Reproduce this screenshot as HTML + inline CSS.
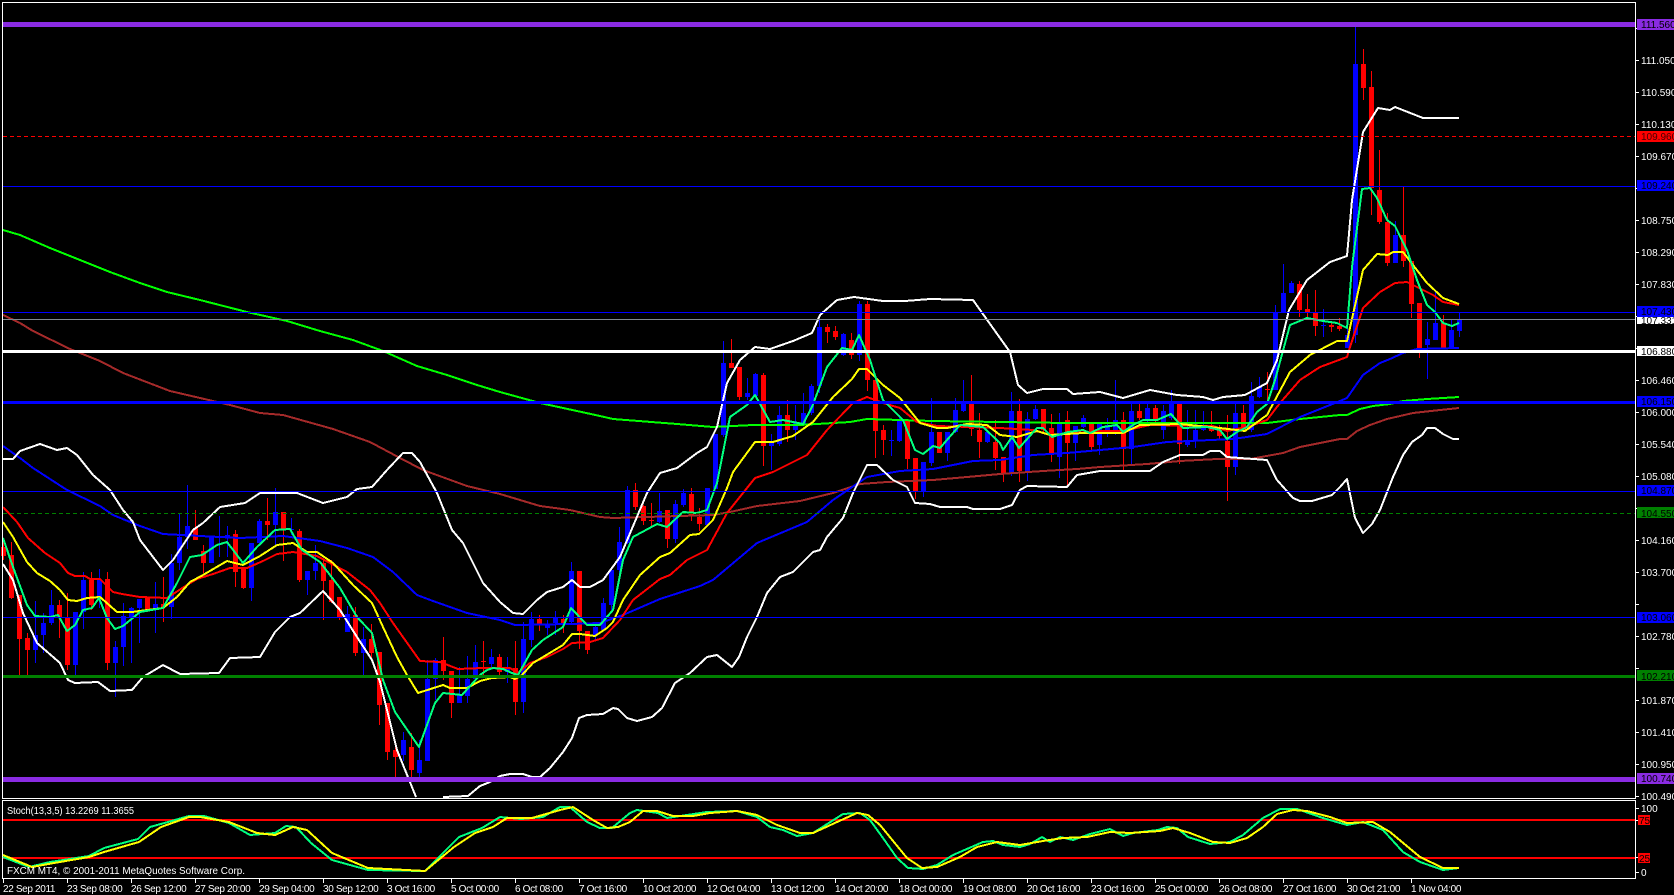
<!DOCTYPE html>
<html>
<head>
<meta charset="utf-8">
<title>FXCM MT4 Chart</title>
<style>
html,body{margin:0;padding:0;background:#000;width:1674px;height:895px;overflow:hidden}
svg{display:block}
text{font-family:"Liberation Sans",sans-serif;font-size:10px;fill:#fff}
.d text{letter-spacing:-.35px}
.k text{fill:#000}
.c{shape-rendering:crispEdges}
polyline{fill:none;stroke-width:2;stroke-linejoin:round}
</style>
</head>
<body>
<svg width="1674" height="895" viewBox="0 0 1674 895" xmlns="http://www.w3.org/2000/svg">
<rect width="1674" height="895" fill="#000"/>

<g class="c">
<!-- red wicks -->
<path stroke="#f00" stroke-width="1" fill="none" d="M3.5 540V560M11.5 542V599M19.5 595V675M27.5 633V675M59.5 600V638M67.5 593V670M91.5 572V610M107.5 572V670M147.5 598V612M163.5 577V622M195.5 510V540M203.5 545V573M235.5 530V587M243.5 568V589M267.5 498V540M283.5 512V561M299.5 529V582M323.5 560V620M331.5 560V603M339.5 597V620M355.5 607V656M371.5 624V660M379.5 652V725M387.5 703V760M395.5 745V777M411.5 733V777M443.5 637V680M451.5 671V718M483.5 641V677M499.5 654V675M515.5 641V715M539.5 615V631M563.5 615V633M579.5 571V649M587.5 631V654M635.5 483V510M643.5 505V525M651.5 503V527M667.5 510V548M691.5 488V521M699.5 508V531M731.5 339V368M739.5 367V400M763.5 373V466M787.5 400V442M827.5 324V343M835.5 326V340M851.5 333V359M867.5 301V391M875.5 380V458M883.5 425V455M907.5 420V469M915.5 458V499M939.5 432V453M971.5 375V436M979.5 413V458M995.5 420V470M1003.5 457V482M1019.5 399V482M1043.5 409V432M1051.5 414V462M1067.5 411V486M1091.5 423V450M1123.5 412V470M1139.5 404V420M1155.5 405V422M1179.5 404V464M1211.5 411V432M1219.5 425V440M1227.5 415V501M1243.5 405V432M1267.5 372V400M1299.5 281V317M1307.5 294V317M1315.5 290V336M1331.5 321V332M1339.5 318V331M1363.5 49V100M1371.5 71V215M1379.5 150V224M1387.5 213V266M1403.5 187V267M1411.5 261V318M1419.5 303V358M1443.5 315V348"/>
<!-- blue wicks -->
<path stroke="#00f" stroke-width="1" fill="none" d="M35.5 601V663M43.5 613V653M51.5 590V625M75.5 612V675M83.5 572V629M99.5 569V608M115.5 641V697M123.5 603V666M131.5 607V663M139.5 599V643M155.5 582V633M171.5 554V619M179.5 513V570M187.5 485V549M211.5 536V563M219.5 516V557M227.5 526V557M251.5 543V601M259.5 519V543M275.5 488V547M291.5 518V535M307.5 571V595M315.5 545V580M347.5 606V632M363.5 627V675M403.5 732V761M419.5 740V777M427.5 660V761M435.5 658V700M459.5 667V703M467.5 656V703M475.5 645V679M491.5 649V667M507.5 657V683M523.5 622V713M531.5 612V647M547.5 620V635M555.5 611V635M571.5 562V625M595.5 622V640M603.5 598V630M611.5 570V610M619.5 527V575M627.5 486V544M659.5 493V523M675.5 500V543M683.5 489V507M707.5 488V526M715.5 434V489M723.5 341V437M747.5 378V400M755.5 373V397M771.5 434V470M779.5 406V446M795.5 405V440M803.5 393V425M811.5 384V415M819.5 320V393M843.5 333V356M859.5 301V361M891.5 430V456M899.5 415V442M923.5 462V497M931.5 398V466M947.5 432V461M955.5 398V433M963.5 380V412M987.5 432V443M1011.5 392V476M1027.5 412V481M1035.5 405V420M1059.5 413V478M1075.5 426V461M1083.5 415V428M1099.5 423V455M1107.5 418V437M1115.5 380V435M1131.5 404V465M1147.5 404V422M1163.5 405V439M1171.5 390V420M1187.5 410V447M1195.5 410V448M1203.5 411V431M1235.5 404V475M1251.5 382V432M1259.5 377V398M1275.5 305V390M1283.5 264V313M1291.5 281V293M1323.5 309V337M1347.5 322V348M1355.5 27V343M1395.5 221V263M1427.5 322V379M1435.5 290V340M1451.5 320V348M1459.5 313V337"/>
<!-- red bodies -->
<path fill="#f00" d="M1 547h5V556h-5zM9 555h5V598h-5zM17 595h5V639h-5zM25 638h5V650h-5zM57 605h5V617h-5zM65 618h5V665h-5zM89 580h5V605h-5zM105 579h5V663h-5zM145 598h5V610h-5zM161 604h5V607h-5zM193 528h5V540h-5zM201 551h5V563h-5zM233 534h5V572h-5zM241 568h5V588h-5zM265 521h5V525h-5zM281 512h5V530h-5zM297 531h5V580h-5zM321 563h5V581h-5zM329 580h5V602h-5zM337 597h5V617h-5zM353 615h5V653h-5zM369 639h5V653h-5zM377 652h5V705h-5zM385 703h5V752h-5zM393 750h5V757h-5zM409 747h5V770h-5zM441 660h5V671h-5zM449 671h5V703h-5zM481 661h5V662h-5zM497 657h5V672h-5zM513 668h5V702h-5zM537 619h5V624h-5zM561 619h5V624h-5zM577 571h5V631h-5zM585 631h5V650h-5zM633 490h5V507h-5zM641 506h5V521h-5zM649 520h5V521h-5zM665 510h5V539h-5zM689 494h5V515h-5zM697 517h5V524h-5zM729 363h5V368h-5zM737 367h5V397h-5zM761 375h5V446h-5zM785 415h5V430h-5zM825 327h5V332h-5zM833 331h5V337h-5zM849 340h5V355h-5zM865 304h5V380h-5zM873 380h5V431h-5zM881 430h5V440h-5zM905 420h5V459h-5zM913 458h5V491h-5zM937 432h5V453h-5zM969 404h5V429h-5zM977 430h5V442h-5zM993 442h5V458h-5zM1001 457h5V473h-5zM1017 411h5V471h-5zM1041 409h5V430h-5zM1049 428h5V455h-5zM1065 420h5V443h-5zM1089 423h5V447h-5zM1121 420h5V449h-5zM1137 411h5V418h-5zM1153 408h5V420h-5zM1177 404h5V444h-5zM1209 425h5V431h-5zM1217 430h5V436h-5zM1225 441h5V467h-5zM1241 413h5V430h-5zM1265 389h5V390h-5zM1297 284h5V310h-5zM1305 309h5V312h-5zM1313 312h5V326h-5zM1329 325h5V327h-5zM1337 326h5V329h-5zM1361 64h5V88h-5zM1369 87h5V188h-5zM1377 190h5V222h-5zM1385 222h5V263h-5zM1401 235h5V261h-5zM1409 261h5V304h-5zM1417 303h5V348h-5zM1441 323h5V348h-5z"/>
<!-- blue bodies -->
<path fill="#00f" d="M33 635h5V650h-5zM41 623h5V635h-5zM49 605h5V623h-5zM73 612h5V665h-5zM81 580h5V612h-5zM97 580h5V597h-5zM113 647h5V663h-5zM121 616h5V647h-5zM129 608h5V617h-5zM137 599h5V608h-5zM153 604h5V610h-5zM169 563h5V607h-5zM177 537h5V563h-5zM185 526h5V537h-5zM209 536h5V563h-5zM217 536h5V537h-5zM225 535h5V537h-5zM249 543h5V588h-5zM257 521h5V543h-5zM273 512h5V525h-5zM289 529h5V530h-5zM305 571h5V580h-5zM313 563h5V571h-5zM345 614h5V632h-5zM361 639h5V653h-5zM401 740h5V755h-5zM417 760h5V773h-5zM425 679h5V761h-5zM433 660h5V679h-5zM457 695h5V703h-5zM465 679h5V696h-5zM473 662h5V679h-5zM489 657h5V664h-5zM505 668h5V672h-5zM521 639h5V702h-5zM529 619h5V640h-5zM545 625h5V628h-5zM553 617h5V623h-5zM569 571h5V622h-5zM593 627h5V635h-5zM601 603h5V630h-5zM609 570h5V605h-5zM617 542h5V570h-5zM625 490h5V543h-5zM657 511h5V522h-5zM673 504h5V539h-5zM681 493h5V505h-5zM705 488h5V525h-5zM713 434h5V489h-5zM721 363h5V435h-5zM745 393h5V397h-5zM753 374h5V396h-5zM769 443h5V446h-5zM777 415h5V444h-5zM793 423h5V430h-5zM801 413h5V425h-5zM809 386h5V413h-5zM817 327h5V386h-5zM841 334h5V355h-5zM857 304h5V355h-5zM889 440h5V441h-5zM897 421h5V441h-5zM921 462h5V491h-5zM929 432h5V463h-5zM945 432h5V453h-5zM953 410h5V432h-5zM961 404h5V411h-5zM985 432h5V442h-5zM1009 411h5V473h-5zM1025 419h5V471h-5zM1033 409h5V419h-5zM1057 422h5V457h-5zM1073 426h5V443h-5zM1081 418h5V427h-5zM1097 423h5V445h-5zM1105 425h5V433h-5zM1113 420h5V433h-5zM1129 411h5V449h-5zM1145 408h5V420h-5zM1161 411h5V430h-5zM1169 403h5V418h-5zM1185 440h5V445h-5zM1193 430h5V441h-5zM1201 428h5V430h-5zM1233 413h5V467h-5zM1249 396h5V430h-5zM1257 387h5V397h-5zM1273 312h5V390h-5zM1281 293h5V313h-5zM1289 283h5V293h-5zM1321 325h5V326h-5zM1345 335h5V348h-5zM1353 64h5V335h-5zM1393 235h5V263h-5zM1425 339h5V345h-5zM1433 323h5V340h-5zM1449 330h5V348h-5zM1457 319h5V331h-5z"/>

<!-- brown MA -->
<polyline stroke="#a52a2a" points="3,315 20,323 33,331 70,349 100,361 123,373 170,391 213,401 230,405 260,413 283,415 333,429 370,442 400,458 423,470 467,486 500,494 540,506 570,510 600,517 613,518 713,515 730,512 757,506 800,501 833,493 860,484 887,482 933,480 967,477 1000,474 1043,471 1077,469 1100,467 1147,464 1180,461 1217,459 1250,459 1283,453 1300,447 1340,439 1347,439 1357,431 1370,425 1387,419 1413,413 1440,410 1459,408"/>
<!-- green MA -->
<polyline stroke="#0f0" points="3,230 20,235 50,248 80,260 110,272 140,283 167,292 200,300 247,312 287,321 320,331 353,340 383,351 417,366 447,375 477,385 500,392 540,403 600,416 613,419 677,424 713,427 753,425 800,425 850,422 867,419 933,421 1000,422 1067,423 1167,423 1267,423 1300,419 1340,415 1347,415 1360,409 1373,406 1390,404 1403,401 1427,399 1459,397"/>
<!-- blue MA -->
<polyline stroke="#00f" points="3,446 20,458 33,468 67,490 100,506 113,515 140,526 163,534 200,536 240,538 283,536 320,541 347,548 373,557 393,572 417,595 433,601 467,613 500,620 515,625 570,624 600,623 623,615 660,599 700,586 713,580 757,543 807,522 833,500 867,477 900,471 933,469 973,461 1000,460 1033,455 1067,453 1133,447 1167,442 1233,439 1267,434 1300,417 1340,401 1347,398 1363,375 1380,363 1390,359 1403,353 1417,349 1459,348"/>
<!-- bollinger upper -->
<polyline stroke="#fff" points="3,459 13,459 20,451 40,444 57,450 67,448 77,455 93,475 110,490 123,510 133,522 140,540 163,570 173,560 193,530 203,523 220,507 245,503 260,493 297,493 323,503 347,497 357,489 372,487 387,470 403,453 412,453 420,462 437,493 452,530 463,543 483,583 500,602 513,613 523,614 537,600 547,592 563,587 572,580 580,587 590,587 603,580 620,557 647,493 660,473 677,468 697,453 707,447 717,427 727,383 740,360 755,347 770,349 793,341 812,333 820,315 837,300 854,297 883,301 905,301 930,299 973,300 1000,338 1010,352 1018,385 1027,393 1043,389 1067,389 1073,394 1100,392 1123,398 1150,390 1177,395 1203,397 1213,400 1223,397 1245,395 1267,383 1277,360 1289,310 1307,280 1330,262 1347,256 1352,200 1363,132 1378,108 1390,110 1395,107 1423,118 1459,118"/>
<!-- bollinger lower -->
<polyline stroke="#fff" points="3,564 13,580 23,613 37,643 60,663 68,680 75,683 98,682 110,691 132,690 143,677 163,665 180,674 219,673 230,658 260,657 275,632 290,617 300,613 323,591 340,610 357,637 372,660 380,682 397,750 416,797"/>
<polyline stroke="#fff" points="443,797 468,796 480,786 490,782 500,776 510,774 523,774 532,777 540,777 550,768 563,752 572,738 579,718 587,715 603,714 613,708 618,709 627,718 637,721 652,717 662,708 675,683 690,673 707,657 717,655 732,667 739,657 747,637 757,617 767,593 780,577 793,572 813,552 820,550 827,537 843,518 853,493 867,465 877,465 893,480 907,487 915,503 930,504 940,507 967,507 973,509 1000,509 1012,505 1020,490 1027,486 1067,487 1077,475 1100,471 1150,471 1163,462 1180,455 1203,455 1210,451 1220,451 1227,457 1267,460 1277,480 1293,498 1300,501 1312,501 1332,495 1340,487 1347,479 1355,518 1363,533 1372,524 1380,510 1393,477 1403,455 1412,442 1422,435 1427,428 1435,428 1443,434 1453,439 1459,439"/>
<!-- red EMA -->
<polyline stroke="#f00" points="3,507 17,522 28,538 45,553 60,563 68,573 75,576 85,576 90,579 100,579 113,592 122,594 140,597 167,598 187,585 197,579 213,574 230,568 247,568 263,561 277,554 293,552 317,556 330,563 347,572 370,590 380,603 393,623 420,661 440,662 458,669 483,668 510,668 518,673 530,663 547,657 563,649 572,643 590,642 603,638 620,620 633,600 660,579 670,575 687,560 707,550 727,513 755,478 773,472 807,455 827,430 853,403 867,397 883,403 900,408 917,422 937,426 1000,428 1033,430 1050,435 1100,431 1123,431 1150,425 1213,426 1227,431 1247,427 1267,420 1280,403 1300,380 1320,367 1347,357 1350,347 1363,308 1380,292 1395,283 1407,282 1417,287 1433,295 1443,302 1459,305"/>
<!-- yellow EMA -->
<polyline stroke="#ff0" points="3,522 13,537 27,562 37,573 50,581 60,590 68,600 77,601 87,598 100,597 117,612 132,612 163,608 177,597 190,582 203,575 227,561 243,565 260,556 277,545 293,543 307,552 317,552 333,563 353,585 372,603 383,627 397,657 407,675 418,693 443,685 450,688 467,688 480,681 492,678 510,677 515,679 522,675 533,663 563,645 572,634 580,634 595,636 607,628 613,622 623,600 640,575 660,557 670,553 690,535 699,534 713,520 727,488 733,472 755,442 773,442 793,436 813,422 833,397 852,379 859,369 867,369 883,385 900,398 920,423 937,428 947,428 967,424 987,425 1000,435 1017,437 1037,431 1050,435 1083,433 1123,433 1140,425 1180,424 1220,428 1245,431 1267,415 1290,372 1310,355 1337,341 1347,341 1363,270 1377,254 1388,255 1393,252 1403,252 1413,265 1427,283 1443,298 1459,304"/>
<!-- spring green EMA -->
<polyline stroke="#00ff7f" points="3,538 13,567 27,605 35,616 50,617 58,615 67,631 75,625 83,610 92,608 99,598 107,618 115,629 123,626 140,612 163,608 177,583 190,557 202,555 217,545 227,542 243,563 257,547 275,530 290,529 302,550 320,562 340,588 357,617 372,633 383,680 395,712 419,747 435,703 443,693 462,695 480,675 487,670 493,668 503,669 512,673 518,675 532,650 543,640 563,627 571,608 587,625 600,625 613,610 623,560 633,537 657,524 667,527 683,512 697,513 707,510 717,483 730,417 747,405 755,395 770,422 783,420 803,424 812,407 827,367 842,348 852,350 859,335 870,360 883,400 903,420 915,450 923,454 933,446 940,448 960,425 983,427 1000,443 1003,450 1012,437 1019,448 1037,428 1043,428 1052,437 1068,432 1083,430 1090,433 1103,427 1117,425 1123,432 1133,425 1143,420 1157,420 1171,414 1183,428 1207,427 1220,430 1227,439 1237,432 1247,427 1257,412 1267,404 1275,380 1290,325 1307,318 1323,321 1337,323 1347,328 1352,267 1362,189 1370,188 1377,198 1387,220 1395,226 1407,250 1417,280 1427,305 1435,312 1443,323 1452,326 1459,323"/>

<!-- horizontal objects -->
<rect x="3" y="22" width="1632" height="5" fill="#8a2be2"/>
<line x1="3" x2="1635" y1="136.5" y2="136.5" stroke="#f00" stroke-dasharray="4 3"/>
<rect x="3" y="186" width="1632" height="1" fill="#00f"/>
<rect x="3" y="312" width="1632" height="1" fill="#00f"/>
<rect x="3" y="319" width="1632" height="1" fill="#808890"/>
<rect x="3" y="350" width="1632" height="3" fill="#fff"/>
<rect x="3" y="401" width="1632" height="3" fill="#00f"/>
<rect x="3" y="491" width="1632" height="1" fill="#00f"/>
<line x1="3" x2="1635" y1="513.5" y2="513.5" stroke="#008000" stroke-dasharray="4 3"/>
<rect x="3" y="617" width="1632" height="1" fill="#00f"/>
<rect x="3" y="675" width="1632" height="3" fill="#008000"/>
<rect x="3" y="777" width="1632" height="5" fill="#8a2be2"/>

<!-- frame -->
<path fill="none" stroke="#fff" stroke-width="1" d="M2.5 2.5H1635.5V798.5H2.5ZM2.5 800.5H1635.5V878.5H2.5Z"/>

<!-- stochastic -->
<rect x="3" y="819" width="1632" height="2" fill="#f00"/>
<rect x="3" y="857" width="1632" height="2" fill="#f00"/>
<polyline stroke="#00ff7f" points="3,857 29,867 50,862 89,856 104,848 138,839 150,827 168,822 189,816 204,816 229,823 250,835 275,833 286,826 296,827 311,843 332,860 368,870 425,871 459,837 482,828 500,817 521,819 543,817 560,807 570,807 587,822 600,828 612,828 630,813 637,810 658,813 667,818 687,815 707,812 737,811 757,817 770,827 783,830 797,836 813,833 843,814 860,813 870,820 883,838 897,858 908,868 923,869 937,865 953,855 983,842 993,841 1003,845 1020,847 1030,844 1042,837 1050,842 1060,837 1073,840 1090,834 1110,829 1123,836 1133,833 1158,830 1167,827 1177,828 1188,837 1210,844 1230,842 1243,835 1263,818 1280,809 1297,809 1323,818 1347,825 1363,822 1383,830 1403,852 1420,862 1443,870 1459,868"/>
<polyline stroke="#ff0" points="3,855 32,867 54,863 89,857 104,852 139,842 161,827 189,817 200,817 229,822 257,833 275,835 293,827 307,830 332,853 368,868 425,871 454,847 475,833 493,827 507,818 532,818 560,810 573,807 593,820 607,828 618,827 630,822 643,811 657,811 673,816 693,816 710,813 737,811 757,815 777,825 800,833 813,833 837,822 857,813 868,815 880,825 907,858 922,868 937,867 960,857 977,847 997,842 1020,845 1043,841 1063,838 1087,837 1110,832 1130,833 1160,831 1173,828 1190,833 1213,842 1230,843 1247,838 1263,827 1277,814 1293,810 1307,811 1330,817 1347,823 1373,822 1390,832 1420,857 1443,868 1459,868"/>

<!-- axis ticks -->
<path stroke="#fff" stroke-width="1" fill="none" d="M1636 28.5h3M1636 60.5h3M1636 92.5h3M1636 124.5h3M1636 156.5h3M1636 188.5h3M1636 220.5h3M1636 252.5h3M1636 284.5h3M1636 316.5h3M1636 348.5h3M1636 380.5h3M1636 412.5h3M1636 444.5h3M1636 476.5h3M1636 508.5h3M1636 540.5h3M1636 572.5h3M1636 604.5h3M1636 636.5h3M1636 668.5h3M1636 700.5h3M1636 732.5h3M1636 764.5h3M1636 796.5h3M1636 808.5h3M1636 820.5h3M1636 857.5h3M1636 872.5h3"/>
<path stroke="#fff" stroke-width="1" fill="none" d="M3.5 879v4M67.5 879v4M131.5 879v4M195.5 879v4M259.5 879v4M323.5 879v4M387.5 879v4M451.5 879v4M515.5 879v4M579.5 879v4M643.5 879v4M707.5 879v4M771.5 879v4M835.5 879v4M899.5 879v4M963.5 879v4M1027.5 879v4M1091.5 879v4M1155.5 879v4M1219.5 879v4M1283.5 879v4M1347.5 879v4M1411.5 879v4"/>

<!-- coloured price tag backgrounds -->
<rect x="1637" y="19" width="37" height="11" fill="#8a2be2"/>
<rect x="1637" y="131" width="37" height="11" fill="#f00"/>
<rect x="1637" y="180" width="37" height="11" fill="#00f"/>
<rect x="1637" y="306" width="37" height="11" fill="#00f"/>
<rect x="1637" y="317" width="37" height="7" fill="#fff"/>
<rect x="1637" y="346" width="37" height="10" fill="#fff"/>
<rect x="1637" y="396" width="37" height="11" fill="#00f"/>
<rect x="1637" y="485" width="37" height="11" fill="#00f"/>
<rect x="1637" y="507" width="37" height="11" fill="#008000"/>
<rect x="1637" y="612" width="37" height="11" fill="#00f"/>
<rect x="1637" y="670" width="37" height="11" fill="#008000"/>
<rect x="1637" y="773" width="37" height="11" fill="#8a2be2"/>
<rect x="1638" y="815" width="12" height="10" fill="#f00"/>
<rect x="1638" y="853" width="12" height="10" fill="#f00"/>
</g>

<!-- price axis text -->
<g text-anchor="start">
<text x="1641" y="64">111.050</text>
<text x="1641" y="96">110.590</text>
<text x="1641" y="128">110.130</text>
<text x="1641" y="160">109.670</text>
<text x="1641" y="224">108.750</text>
<text x="1641" y="256">108.290</text>
<text x="1641" y="288">107.830</text>
<text x="1641" y="384">106.460</text>
<text x="1641" y="416">106.000</text>
<text x="1641" y="448">105.540</text>
<text x="1641" y="480">105.080</text>
<text x="1641" y="544">104.160</text>
<text x="1641" y="576">103.700</text>
<text x="1641" y="640">102.780</text>
<text x="1641" y="704">101.870</text>
<text x="1641" y="736">101.410</text>
<text x="1641" y="768">100.950</text>
<text x="1641" y="800">100.490</text>
<text x="1641" y="812">100</text>
<text x="1641" y="876">0</text>
</g>
<g class="k">
<text x="1641" y="28">111.560</text>
<text x="1641" y="140" style="fill:#400">109.960</text>
<text x="1641" y="189">109.240</text>
<text x="1641" y="315">107.430</text>
<text x="1641" y="324">107.331</text>
<text x="1641" y="355">106.880</text>
<text x="1641" y="405">106.150</text>
<text x="1641" y="494">104.870</text>
<text x="1641" y="517">104.550</text>
<text x="1641" y="621">103.060</text>
<text x="1641" y="680">102.210</text>
<text x="1641" y="782">100.740</text>
<text x="1639" y="824">75</text>
<text x="1639" y="862">25</text>
</g>

<!-- info text -->
<text x="7" y="814" textLength="127" lengthAdjust="spacingAndGlyphs">Stoch(13,3,5) 13.2269 11.3655</text>
<text x="7" y="874" textLength="238" lengthAdjust="spacingAndGlyphs">FXCM MT4, © 2001-2011 MetaQuotes Software Corp.</text>

<!-- time axis -->
<g class="d">
<text x="3" y="892">22 Sep 2011</text>
<text x="67" y="892">23 Sep 08:00</text>
<text x="131" y="892">26 Sep 12:00</text>
<text x="195" y="892">27 Sep 20:00</text>
<text x="259" y="892">29 Sep 04:00</text>
<text x="323" y="892">30 Sep 12:00</text>
<text x="387" y="892">3 Oct 16:00</text>
<text x="451" y="892">5 Oct 00:00</text>
<text x="515" y="892">6 Oct 08:00</text>
<text x="579" y="892">7 Oct 16:00</text>
<text x="643" y="892">10 Oct 20:00</text>
<text x="707" y="892">12 Oct 04:00</text>
<text x="771" y="892">13 Oct 12:00</text>
<text x="835" y="892">14 Oct 20:00</text>
<text x="899" y="892">18 Oct 00:00</text>
<text x="963" y="892">19 Oct 08:00</text>
<text x="1027" y="892">20 Oct 16:00</text>
<text x="1091" y="892">23 Oct 16:00</text>
<text x="1155" y="892">25 Oct 00:00</text>
<text x="1219" y="892">26 Oct 08:00</text>
<text x="1283" y="892">27 Oct 16:00</text>
<text x="1347" y="892">30 Oct 21:00</text>
<text x="1411" y="892">1 Nov 04:00</text>
</g>
</svg>
</body>
</html>
